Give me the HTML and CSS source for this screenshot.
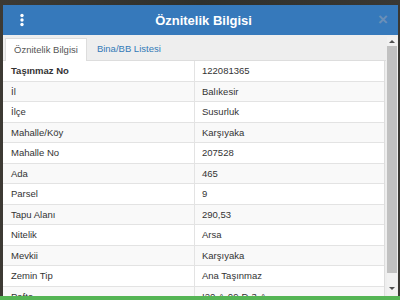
FILE: index.html
```html
<!DOCTYPE html>
<html lang="tr">
<head>
  <meta charset="UTF-8" />
  <meta name="viewport" content="width=device-width, initial-scale=1.0"/>
  <title>Öznitelik Bilgisi</title>
  <link rel="stylesheet" href="styles.css">
</head>
<body>
  <div class="page">
    <div class="dialog">
      <div class="dialog-header">
        <span class="menu-icon">
          <svg width="6" height="14" viewBox="0 0 6 14">
            <circle cx="3" cy="2.5" r="1.7" fill="#fff"/>
            <circle cx="3" cy="7" r="1.7" fill="#fff"/>
            <circle cx="3" cy="11.5" r="1.7" fill="#fff"/>
          </svg>
        </span>
        <h1>Öznitelik Bilgisi</h1>
        <span class="close">×</span>
      </div>

      <div class="dialog-body">
        <div class="content">
          <div class="tabs">
            <div class="tab active">Öznitelik Bilgisi</div>
            <div class="tab">Bina/BB Listesi</div>
          </div>

          <div class="attr-table">
            <div class="row head"><div class="cell">Taşınmaz No</div><div class="cell">122081365</div></div>
            <div class="row"><div class="cell">İl</div><div class="cell">Balıkesir</div></div>
            <div class="row"><div class="cell">İlçe</div><div class="cell">Susurluk</div></div>
            <div class="row"><div class="cell">Mahalle/Köy</div><div class="cell">Karşıyaka</div></div>
            <div class="row"><div class="cell">Mahalle No</div><div class="cell">207528</div></div>
            <div class="row"><div class="cell">Ada</div><div class="cell">465</div></div>
            <div class="row"><div class="cell">Parsel</div><div class="cell">9</div></div>
            <div class="row"><div class="cell">Tapu Alanı</div><div class="cell">290,53</div></div>
            <div class="row"><div class="cell">Nitelik</div><div class="cell">Arsa</div></div>
            <div class="row"><div class="cell">Mevkii</div><div class="cell">Karşıyaka</div></div>
            <div class="row"><div class="cell">Zemin Tip</div><div class="cell">Ana Taşınmaz</div></div>
            <div class="row"><div class="cell">Pafta</div><div class="cell">I20-A-09-D-3-A</div></div>
          </div>
        </div>

        <div class="scrollbar">
          <div class="arrow up"></div>
          <div class="thumb"></div>
          <div class="arrow down"></div>
        </div>
      </div>
    </div>
    <div class="status-bar"></div>
  </div>
</body>
</html>
```

FILE: styles.css
```css
* {
  margin: 0;
  padding: 0;
  box-sizing: border-box;
}

body {
  font-family: 'Liberation Sans', Arial, sans-serif;
  background: #3a3935;
  overflow: hidden;
}

.page {
  height: 300px;
  display: flex;
  flex-direction: column;
  overflow: hidden;
  background: linear-gradient(90deg, #3d3a34 0%, #2f302c 50%, #3a3833 100%);
}

.dialog {
  margin: 5px 2px 0 3px;
  height: 291px;
  flex-shrink: 0;
  background: #fff;
  display: flex;
  flex-direction: column;
  overflow: hidden;
}

.dialog-header {
  height: 30px;
  flex-shrink: 0;
  background: #3679bb;
  display: flex;
  align-items: center;
  padding: 0 10px 0 16px;
}

.menu-icon {
  display: flex;
  width: 6px;
}

.dialog-header h1 {
  flex: 1;
  text-align: center;
  color: #fff;
  font-size: 13px;
  font-weight: bold;
  padding-left: 4px;
}

.close {
  color: #6a8fb8;
  font-size: 17px;
  font-weight: bold;
  line-height: 1;
  margin-top: -1px;
}

.dialog-body {
  flex: 1;
  display: flex;
  overflow: hidden;
  background: #eee;
}

.content {
  flex: 1;
  display: flex;
  flex-direction: column;
}

.tabs {
  height: 26px;
  flex-shrink: 0;
  display: flex;
  gap: 2px;
  padding: 3px 0 0 2px;
  background: #eee;
  border-bottom: 1px solid #ddd;
}

.tab {
  font-size: 9.5px;
  color: #337ab7;
  padding: 0 8px;
  line-height: 22px;
}

.tab.active {
  color: #555;
  background: #fff;
  border: 1px solid #ddd;
  border-bottom: none;
  margin-bottom: -1px;
  line-height: 21px;
}

.attr-table {
  background: #fff;
  margin-right: 1px;
  border-right: 1px solid #ddd;
}

.row {
  display: grid;
  grid-template-columns: 191px 1fr;
  height: 20.5px;
  border-bottom: 1px solid #e3e3e3;
  font-size: 9.5px;
  color: #333;
}

.row:nth-child(even) {
  background: #f9f9f9;
}

.row.head .cell:first-child {
  font-weight: bold;
}

.cell {
  display: flex;
  align-items: center;
  padding: 0 8px;
}

.cell + .cell {
  border-left: 1px solid #e3e3e3;
  padding-left: 7px;
}

.scrollbar {
  width: 10px;
  margin: 2px 1px 0 1px;
  background: #f1f1f1;
  display: flex;
  flex-direction: column;
  align-items: center;
}

.thumb {
  width: 10px;
  flex: 1;
  background: #c1c1c1;
  margin: 3px 0 14px 0;
}

.arrow {
  width: 0;
  height: 0;
  border-left: 3px solid transparent;
  border-right: 3px solid transparent;
  margin-top: 3px;
}

.arrow.up {
  border-bottom: 3px solid #505050;
}

.arrow.down {
  border-top: 3px solid #505050;
  margin: 0 0 6px 0;
}

.status-bar {
  height: 10px;
  flex-shrink: 0;
  background: #55b555;
}
```
